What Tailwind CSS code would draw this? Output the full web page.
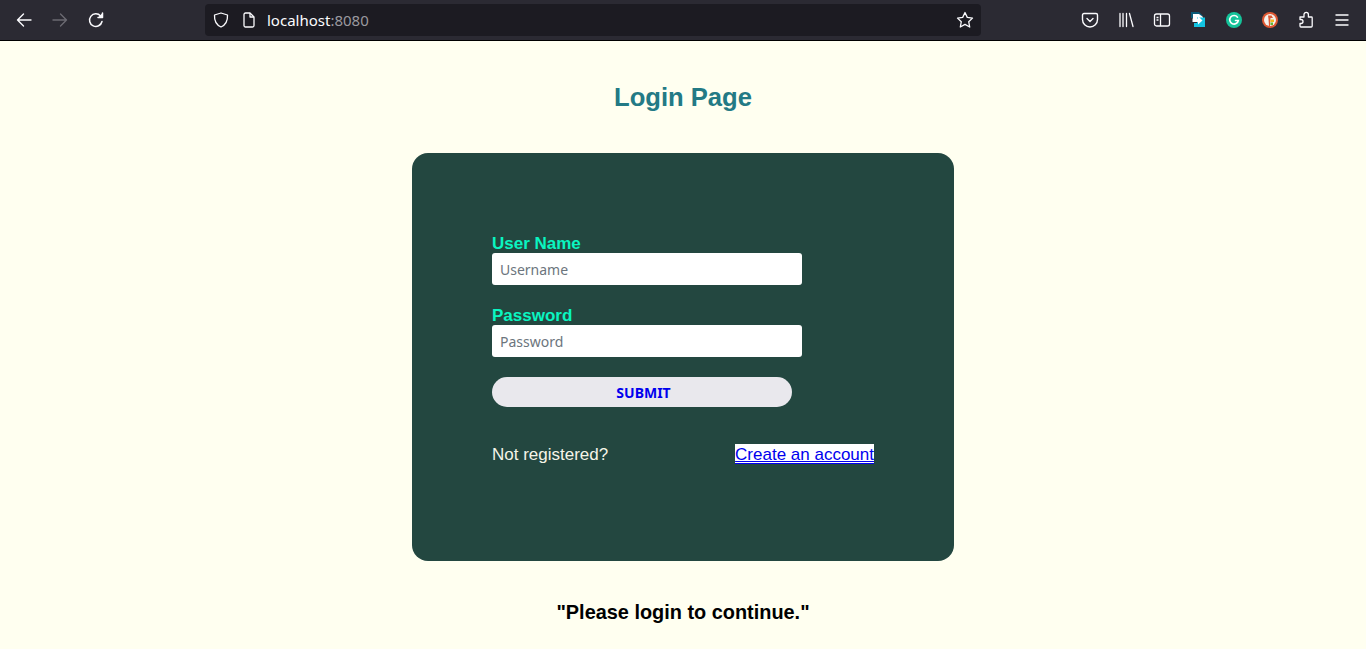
<!DOCTYPE html>
<html lang="en">
<head>
    <meta charset="UTF-8">
    <title>Login Page</title>
    <script src="https://cdn.jsdelivr.net/npm/@tailwindcss/browser@4"></script>
</head>
<body class="bg-[#fffff0] h-[649px] overflow-hidden font-['Liberation_Sans',sans-serif]">

    <!-- Browser toolbar -->
    <div class="h-[41px] bg-[#2b2a33] border-b border-black flex items-center text-[#fbfbfe]">
        <div class="flex items-center w-[205px] pl-[15px] gap-[18px]">
            <svg class="w-[18px] h-[18px]" viewBox="0 0 18 18" fill="none" stroke="currentColor" stroke-width="1.4" stroke-linecap="round" stroke-linejoin="round"><path d="M16 9H2.500M8.500 3 2.500 9l6 6"/></svg>
            <svg class="w-[18px] h-[18px] text-[#6b6a72]" viewBox="0 0 18 18" fill="none" stroke="currentColor" stroke-width="1.4" stroke-linecap="round" stroke-linejoin="round"><path d="M2 9h13.500M9.500 3l6 6-6 6"/></svg>
            <svg class="w-[18px] h-[18px]" viewBox="0 0 18 18" fill="none" stroke="currentColor" stroke-width="1.5" stroke-linecap="round" stroke-linejoin="round"><path d="M15 10.500A6.300 6.300 0 1 1 13.600 5"/><path d="M15.500 2v4.500H11" fill="currentColor"/></svg>
        </div>
        <div class="w-[776px] h-[32px] bg-[#1c1b22] rounded-[4px] flex items-center pl-[8px] pr-[7px]">
            <svg class="w-[16px] h-[16px] mr-[12px]" viewBox="0 0 16 16" fill="none" stroke="currentColor" stroke-width="1.3" stroke-linejoin="round"><path d="M8 1 14.500 3c.3 5.500-1.700 9.800-6.500 12C3.200 12.800 1.200 8.500 1.500 3z"/></svg>
            <svg class="w-[16px] h-[16px] mr-[10px]" viewBox="0 0 16 16" fill="none" stroke="currentColor" stroke-width="1.3" stroke-linejoin="round"><path d="M3 2.500A1.500 1.500 0 0 1 4.500 1H9l4 4v8.500a1.500 1.500 0 0 1-1.500 1.500h-7A1.500 1.500 0 0 1 3 13.500z"/><path d="M9 1v4h4"/></svg>
            <span class="text-[15px] pt-[1px] font-['Noto_Sans',sans-serif]">localhost<span class="text-[#9a999f]">:8080</span></span>
            <svg class="w-[18px] h-[18px] ml-auto" viewBox="0 0 18 18" fill="none" stroke="currentColor" stroke-width="1.3" stroke-linejoin="round"><path d="m9 1.500 2.300 4.900 5.200.7-3.800 3.600 1 5.300L9 13.400 4.300 16l1-5.300L1.500 7.100l5.200-.7z"/></svg>
        </div>
        <div class="flex items-center ml-[100px] gap-[18px]">
            <svg class="w-[18px] h-[18px]" viewBox="0 0 18 18" fill="none" stroke="currentColor" stroke-width="1.4" stroke-linecap="round" stroke-linejoin="round"><path d="M3 2.500h12A1.500 1.500 0 0 1 16.500 4v4.500a7.500 7.500 0 0 1-15 0V4A1.500 1.500 0 0 1 3 2.500z"/><path d="m6 7.500 3 3 3-3"/></svg>
            <svg class="w-[18px] h-[18px]" viewBox="0 0 18 18" fill="none" stroke="currentColor" stroke-width="1.3" stroke-linecap="round"><path d="M3 2.500v13M6 2.500v13M9.500 2.500v13M12.500 2.500l3.500 13"/></svg>
            <svg class="w-[18px] h-[18px]" viewBox="0 0 18 18" fill="none" stroke="currentColor" stroke-width="1.3" stroke-linejoin="round"><rect x="1.500" y="3" width="15" height="12" rx="2"/><path d="M7.500 3v12M3.500 6.500h2M3.500 9h2"/></svg>
            <svg class="w-[18px] h-[18px]" viewBox="0 0 18 18"><path d="M2 1h8l4 4H2z" fill="#0b5a77"/><path d="M2 1h3v6H2z" fill="#0b5a77"/><path d="M4 3h6l4 3v2H4z" fill="#fff"/><path d="M16 6.500V16H5v-4h3V6.500z" fill="#13c4e2"/><path d="M3.500 7.500H9V5l4.500 4.500L9 13.500V11H3.500z" fill="#fff"/></svg>
            <svg class="w-[18px] h-[18px]" viewBox="0 0 18 18"><circle cx="9" cy="9" r="8" fill="#15c39a"/><path d="M12.500 6.200A4.300 4.300 0 1 0 13.300 9.500H10.500" fill="none" stroke="#fff" stroke-width="1.600" stroke-linecap="round"/></svg>
            <svg class="w-[18px] h-[18px]" viewBox="0 0 18 18"><circle cx="9" cy="9" r="8" fill="#de5833"/><circle cx="9" cy="9" r="6" fill="#f4f1ec"/><path d="M7 4.500h3.500L12 7H9.500l-.5 8H8L7.500 8z" fill="#de5833"/><path d="M9.500 8.500h3.500v2.500H9.500z" fill="#f2b71d"/><path d="M9.500 11.500h2.500v2.500H9.500z" fill="#5fb834"/></svg>
            <svg class="w-[18px] h-[18px]" viewBox="0 0 18 18" fill="none" stroke="currentColor" stroke-width="1.3" stroke-linejoin="round"><path d="M3 6h4V3.500a2.200 2.200 0 0 1 4.400 0V6h3a.8.8 0 0 1 .8.800V15a1 1 0 0 1-1 1H4a1 1 0 0 1-1-1v-2.500h1a2 2 0 0 0 0-4H3z"/></svg>
            <svg class="w-[18px] h-[18px]" viewBox="0 0 18 18" fill="none" stroke="currentColor" stroke-width="1.400" stroke-linecap="round"><path d="M3 4h12M3 9h12M3 14h12"/></svg>
        </div>
    </div>

    <main class="flex flex-col items-center">
        <h1 class="mt-[39px] h-[34px] text-[25.6px] leading-[34px] font-bold text-[#237a85]">Login Page</h1>

        <div class="mt-[39px] w-[542px] h-[408px] bg-[#234740] rounded-[16px] pl-[80px] pt-[82px]">
            <form class="w-[310px]">
                <label class="block text-[17px] leading-[18px] font-bold text-[#0af5c0]">User Name</label>
                <input type="text" placeholder="Username" class="block w-[310px] h-[32px] bg-white rounded-[3px] px-[8px] text-[14px] font-['Noto_Sans',sans-serif] placeholder:text-[#6c757d]">
                <label class="block mt-[22px] text-[17px] leading-[18px] font-bold text-[#0af5c0]">Password</label>
                <input type="password" placeholder="Password" class="block w-[310px] h-[32px] bg-white rounded-[3px] px-[8px] text-[14px] font-['Noto_Sans',sans-serif] placeholder:text-[#6c757d]">
                <button type="button" class="block mt-[20px] w-[300px] h-[30px] pl-[3px] bg-[#e9e8ed] rounded-full text-[14px] font-bold text-[#0000ee] font-['Noto_Sans',sans-serif]">SUBMIT</button>
            </form>
            <div class="mt-[37px] w-[382px] h-[20px] flex justify-between items-start text-[17px]">
                <span class="text-[#f5f5e8] leading-[22px]">Not registered?</span>
                <a href="#" class="bg-white text-[#0000ee] underline border-b border-[#0000ee] pt-[2px] leading-[17px]">Create an account</a>
            </div>
        </div>

        <p class="mt-[39px] text-[19.9px] leading-[24px] font-bold text-black">"Please login to continue."</p>
    </main>
</body>
</html>
